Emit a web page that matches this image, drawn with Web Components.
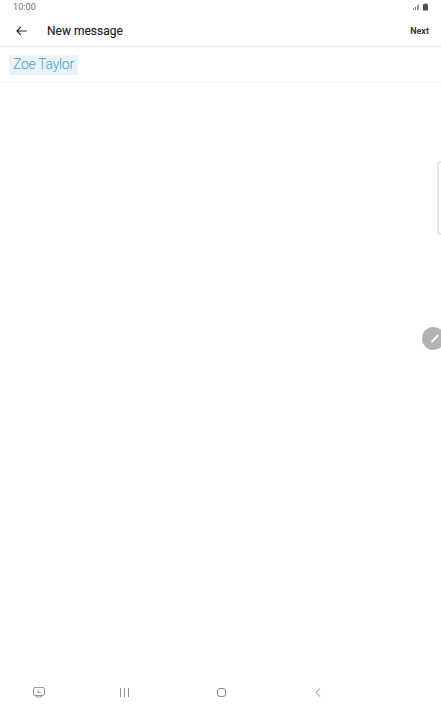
<!DOCTYPE html>
<html><head><meta charset="utf-8"><style>
html,body{margin:0;padding:0;background:#fff}
body{width:441px;height:706px;overflow:hidden;position:relative;font-family:Roboto,"Liberation Sans",sans-serif}
</style></head><body>
<app-screen>
<status-bar slot="status" time="10:00"></status-bar>
<app-header slot="header" title="New message" action="Next"></app-header>
<recipient-row slot="recipient"><recipient-chip>Zoe Taylor</recipient-chip></recipient-row>
<nav-bar slot="nav"></nav-bar>
<edge-handle slot="overlay"></edge-handle>
<floating-pen slot="overlay"></floating-pen>
</app-screen>
<script>
customElements.define('status-bar', class extends HTMLElement{
  connectedCallback(){
    this.attachShadow({mode:'open'}).innerHTML=`<style>
    :host{display:flex;height:15px;align-items:center;justify-content:space-between;padding:0 12px 0 13px;color:#6b6b6b;font-size:9px;line-height:15px}
    span{letter-spacing:.1px}
    svg{display:block;margin-top:-1px}
    </style><span>${this.getAttribute('time')}</span>
    <svg width="16" height="8" viewBox="0 0 16 8"><path d="M0 7h1V5.500H0zM2 7h1V4H2zM4 7h1V2.500H4z" fill="#7e7e7e"/><path d="M5 7h1V1H5z" fill="#a5a5a5"/><path d="M10 1.200h1.500V.5h2v.7H15V7.500h-5z" fill="#505050"/></svg>`;
  }
});
customElements.define('app-header', class extends HTMLElement{
  connectedCallback(){
    this.attachShadow({mode:'open'}).innerHTML=`<style>
    :host{display:flex;height:31px;align-items:center;border-bottom:1px solid #ececec;color:#222;padding:0 12px 0 16px}
    svg{display:block;flex:none}
    .t{font-size:12px;font-weight:400;margin-left:20px;flex:1;color:#222;-webkit-text-stroke:.15px #222}
    .a{font-size:9px;font-weight:700;color:#3a3a3a}
    </style><svg width="11" height="10" viewBox="0 0 11 10" fill="none" stroke="#222" stroke-width="1.100"><path d="M10.500 5H1M5 .8 .9 5 5 9.200"/></svg>
    <span class="t">${this.getAttribute('title')}</span><span class="a">${this.getAttribute('action')}</span>`;
  }
});
customElements.define('recipient-row', class extends HTMLElement{
  constructor(){super();this.attachShadow({mode:'open'}).innerHTML=`<style>
    :host{display:flex;height:34px;align-items:center;padding:0 0 0 9px;border-bottom:1px solid #f1f1f1;box-sizing:content-box}
  </style><slot></slot>`;}
});
customElements.define('recipient-chip', class extends HTMLElement{
  constructor(){super();this.attachShadow({mode:'open'}).innerHTML=`<style>
    :host{display:block;background:#e9f2f6;color:#45a0d2;font-size:14px;font-weight:300;letter-spacing:-.3px;line-height:19px;padding:0 4px;height:20px;width:61px;white-space:nowrap;position:relative;top:1px}
  </style><slot></slot>`;}
});
customElements.define('nav-bar', class extends HTMLElement{
  constructor(){super();this.attachShadow({mode:'open'}).innerHTML=`<style>
    :host{display:flex;height:30px;align-items:center;padding:3px 0 0 33px;box-sizing:border-box}
    svg{display:block;flex:none}
    </style>
    <svg width="12" height="11" viewBox="0 0 12 11" fill="none" stroke="#8c8c8c" stroke-width=".9" style="margin-right:75px"><rect x=".5" y=".5" width="11" height="8" rx="1.500"/><path d="M3.500 8.500v1.500h5V8.500M5 2.500v3h2.500"/></svg>
    <svg width="9" height="9" viewBox="0 0 9 9" stroke="#8f8f8f" fill="none" style="margin-right:88px"><path d="M.5 0v9M4.500 0v9M8.500 0v9"/></svg>
    <svg width="9" height="9" viewBox="0 0 9 9" fill="none" stroke="#8a8a8a" style="margin-right:89px"><rect x=".5" y=".5" width="8" height="8" rx="2.500"/></svg>
    <svg width="6" height="9" viewBox="0 0 6 9" fill="none" stroke="#8a8a8a"><path d="M5.200.4 1 4.500l4.200 4.100"/></svg>`;}
});
customElements.define('edge-handle', class extends HTMLElement{
  constructor(){super();this.attachShadow({mode:'open'}).innerHTML=`<style>
    :host{position:absolute;left:437px;top:161px;width:8px;height:70px;border:2px solid #e6e6e6;border-radius:3px;background:#fff;box-sizing:content-box}
  </style>`;}
});
customElements.define('floating-pen', class extends HTMLElement{
  constructor(){super();this.attachShadow({mode:'open'}).innerHTML=`<style>
    :host{position:absolute;left:422px;top:327px;width:23px;height:23px;border-radius:50%;background:#b3b3b3;display:block}
    svg{display:block}
  </style><svg width="23" height="23" viewBox="0 0 23 23"><path d="M9 15.500l.5-1.800 6-6.200 1.300 1.300-6 6.200z" fill="#fff"/></svg>`;}
});
customElements.define('app-screen', class extends HTMLElement{
  constructor(){super();this.attachShadow({mode:'open'}).innerHTML=`<style>
    :host{display:flex;flex-direction:column;width:441px;height:706px;background:#fff}
    .body{flex:1}
  </style><slot name="status"></slot><slot name="header"></slot><slot name="recipient"></slot><div class="body"></div><slot name="nav"></slot><slot name="overlay"></slot>`;}
});
</script>
</body></html>
